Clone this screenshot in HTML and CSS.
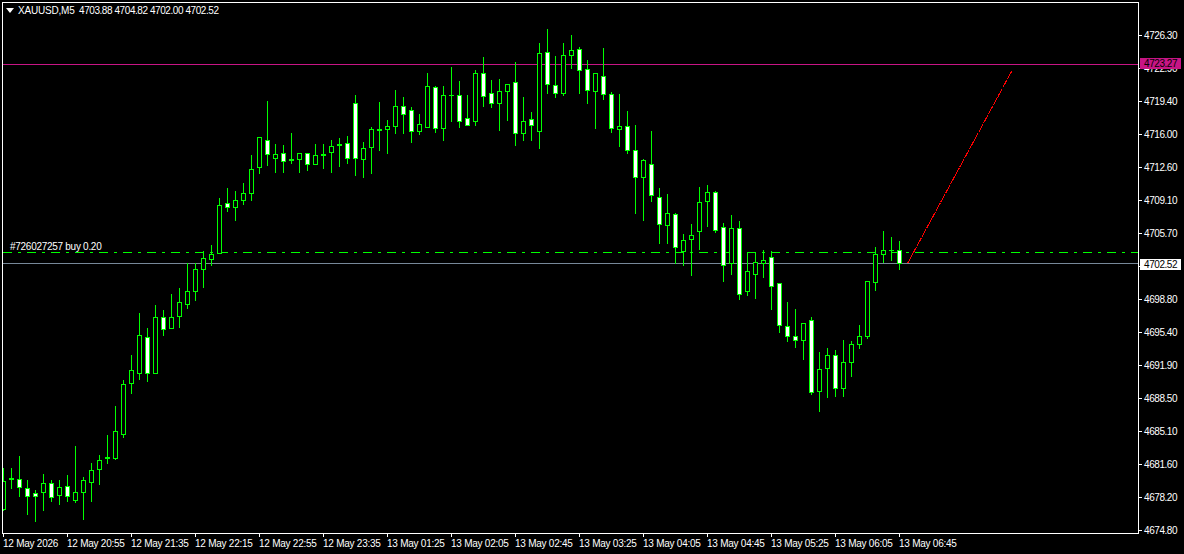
FILE: index.html
```html
<!DOCTYPE html>
<html lang="en">
<head>
    <meta charset="UTF-8">
    <meta name="viewport" content="width=device-width, initial-scale=1.0">
    <title>XAUUSD,M5</title>
    <link rel="stylesheet" href="styles.css">
</head>
<body>
    <div class="terminal">
        <div class="plot">
            <svg id="chart" class="chart-canvas" width="1135" height="530" viewBox="3 3 1135 530" shape-rendering="crispEdges"></svg>
            <div class="chart-title">
                <svg class="title-arrow" width="8" height="5" viewBox="0 0 8 5"><polygon points="0,0 8,0 4,5" fill="#fff"></polygon></svg>
                <span class="symbol">XAUUSD,M5</span>
                <span class="ohlc">4703.88 4704.82 4702.00 4702.52</span>
            </div>
            <div class="order-label">#726027257 buy 0.20</div>
        </div>

        <div class="price-axis">
            <div class="tick">4726.30</div>
            <div class="tick">4722.90</div>
            <div class="tick">4719.40</div>
            <div class="tick">4716.00</div>
            <div class="tick">4712.60</div>
            <div class="tick">4709.10</div>
            <div class="tick">4705.70</div>
            <div class="tick">4702.30</div>
            <div class="tick">4698.80</div>
            <div class="tick">4695.40</div>
            <div class="tick">4691.90</div>
            <div class="tick">4688.50</div>
            <div class="tick">4685.10</div>
            <div class="tick">4681.60</div>
            <div class="tick">4678.20</div>
            <div class="tick">4674.80</div>
            <div class="price-tag level">4723.27</div>
            <div class="price-tag bid">4702.52</div>
        </div>

        <div class="time-axis">
            <div class="time">12 May 2026</div>
            <div class="time">12 May 20:55</div>
            <div class="time">12 May 21:35</div>
            <div class="time">12 May 22:15</div>
            <div class="time">12 May 22:55</div>
            <div class="time">12 May 23:35</div>
            <div class="time">13 May 01:25</div>
            <div class="time">13 May 02:05</div>
            <div class="time">13 May 02:45</div>
            <div class="time">13 May 03:25</div>
            <div class="time">13 May 04:05</div>
            <div class="time">13 May 04:45</div>
            <div class="time">13 May 05:25</div>
            <div class="time">13 May 06:05</div>
            <div class="time">13 May 06:45</div>
        </div>
    </div>

    <script src="script.js"></script>
</body>
</html>
```
FILE: styles.css
```css
body {
    margin: 0;
    background-color: #000;
    color: #fff;
    font-family: "Liberation Sans", sans-serif;
    font-size: 10px;
    line-height: 11px;
    letter-spacing: -0.43px;
}

.terminal {
    display: grid;
    grid-template-columns: 1139px 45px;
    grid-template-rows: 534px 20px;
    width: 1184px;
    height: 554px;
    overflow: hidden;
}

/* Chart area */
.plot {
    position: relative;
    margin: 2px 0 0 2px;
    border: 1px solid #fff;
}

.chart-canvas {
    display: block;
}

.chart-title {
    position: absolute;
    top: 2px;
    left: 3px;
    display: flex;
    align-items: center;
    height: 11px;
}

.title-arrow {
    margin-right: 4px;
}

.symbol {
    width: 61px;
    letter-spacing: -0.2px;
}

.order-label {
    position: absolute;
    top: 238px;
    left: 7px;
    letter-spacing: -0.28px;
}

/* Price scale */
.price-axis {
    position: relative;
    grid-row: 1 / span 2;
    grid-column: 2;
    padding-top: 19px;
}

.tick {
    position: relative;
    height: 33px;
    padding-left: 5px;
    line-height: 33px;
}

.tick::before {
    content: "";
    position: absolute;
    left: 0;
    top: 16px;
    width: 3px;
    height: 1px;
    background-color: #fff;
}

.price-tag {
    position: absolute;
    left: 1px;
    width: 37px;
    height: 11px;
    padding-left: 4px;
    color: #000;
}

.price-tag.level {
    top: 58px;
    background-color: #c71585;
}

.price-tag.bid {
    top: 259px;
    background-color: #fff;
}

/* Time scale */
.time-axis {
    display: flex;
    padding-left: 3px;
}

.time {
    position: relative;
    flex: 0 0 64px;
    padding-top: 4px;
    white-space: nowrap;
    letter-spacing: -0.25px;
}

.time::before {
    content: "";
    position: absolute;
    left: 0;
    top: 0;
    width: 1px;
    height: 3px;
    background-color: #fff;
}
```
FILE: script.js
```js
// high, body top, body bottom, low, fill ("b" hollow bull, "s" white bear, "d" doji)
var candles = [
    [468, 481, 509, 510, "b"], [468, 478, 479, 488, "d"], [456, 479, 487, 496, "s"], [480, 488, 496, 514, "s"],
    [490, 493, 496, 521, "s"], [474, 483, 492, 510, "b"], [480, 483, 497, 501, "s"], [480, 487, 495, 504, "b"],
    [475, 486, 496, 501, "s"], [446, 492, 500, 502, "b"], [477, 480, 492, 519, "b"], [463, 470, 482, 501, "b"],
    [455, 460, 469, 484, "b"], [435, 457, 458, 463, "d"], [406, 431, 458, 459, "b"], [380, 384, 434, 437, "b"],
    [355, 370, 383, 393, "b"], [313, 335, 373, 379, "b"], [328, 337, 373, 381, "s"], [305, 317, 373, 373, "b"],
    [310, 317, 329, 335, "s"], [294, 317, 328, 328, "b"], [288, 302, 316, 327, "b"], [263, 291, 304, 308, "b"],
    [263, 269, 291, 300, "b"], [251, 258, 269, 287, "b"], [245, 254, 259, 265, "b"], [198, 205, 253, 253, "b"],
    [188, 203, 207, 211, "s"], [191, 200, 207, 220, "b"], [183, 193, 200, 204, "b"], [155, 169, 193, 200, "b"],
    [137, 137, 167, 173, "b"], [101, 140, 154, 165, "s"], [144, 154, 158, 172, "b"], [145, 153, 161, 172, "s"],
    [133, 159, 160, 163, "d"], [153, 153, 159, 172, "b"], [153, 153, 164, 170, "s"], [144, 155, 164, 164, "b"],
    [144, 154, 155, 168, "d"], [140, 146, 152, 172, "b"], [138, 144, 145, 166, "d"], [136, 143, 158, 163, "s"],
    [95, 103, 158, 175, "s"], [142, 148, 159, 177, "b"], [127, 129, 147, 173, "b"], [102, 129, 130, 150, "d"],
    [120, 126, 129, 153, "b"], [90, 106, 126, 133, "b"], [97, 106, 114, 133, "s"], [107, 110, 131, 142, "s"],
    [114, 124, 131, 134, "b"], [73, 86, 127, 127, "b"], [86, 87, 128, 132, "s"], [86, 95, 128, 140, "b"],
    [67, 95, 95, 121, "d"], [81, 95, 121, 127, "s"], [95, 118, 125, 125, "s"], [70, 73, 121, 125, "b"],
    [57, 73, 96, 106, "s"], [80, 93, 103, 107, "s"], [79, 91, 103, 130, "b"], [84, 84, 91, 120, "b"],
    [62, 82, 133, 145, "s"], [97, 121, 133, 140, "b"], [112, 119, 125, 140, "s"], [43, 53, 131, 148, "b"],
    [29, 52, 84, 93, "s"], [56, 85, 93, 97, "s"], [43, 55, 93, 95, "b"], [35, 50, 55, 68, "b"],
    [47, 49, 70, 93, "s"], [60, 69, 90, 103, "s"], [73, 73, 91, 128, "b"], [48, 76, 94, 99, "s"],
    [92, 94, 128, 132, "s"], [94, 126, 129, 146, "b"], [111, 126, 150, 153, "s"], [125, 150, 177, 213, "s"],
    [159, 160, 177, 220, "b"], [131, 164, 195, 201, "s"], [188, 197, 224, 243, "s"], [194, 213, 225, 243, "b"],
    [213, 214, 247, 263, "s"], [234, 240, 251, 265, "b"], [224, 235, 239, 275, "b"], [187, 202, 231, 249, "b"],
    [185, 192, 201, 226, "b"], [191, 192, 230, 232, "s"], [223, 227, 265, 281, "s"], [215, 228, 263, 274, "b"],
    [221, 228, 294, 299, "s"], [252, 271, 291, 295, "b"], [252, 262, 274, 298, "b"], [250, 260, 263, 277, "b"],
    [251, 257, 286, 309, "s"], [283, 283, 325, 332, "s"], [302, 326, 336, 341, "s"], [309, 336, 340, 347, "s"],
    [323, 323, 340, 359, "b"], [317, 320, 392, 394, "s"], [352, 369, 391, 411, "b"], [348, 355, 368, 397, "b"],
    [350, 355, 388, 396, "s"], [340, 362, 388, 396, "b"], [341, 344, 362, 376, "b"], [325, 336, 344, 348, "b"],
    [281, 281, 336, 338, "b"], [247, 254, 282, 290, "b"], [231, 250, 254, 262, "b"], [237, 250, 250, 260, "d"],
    [241, 250, 263, 269, "s"]
];

function rect(x, y, w, h, fill) {
    return '<rect x="' + x + '" y="' + y + '" width="' + w + '" height="' + h + '" fill="' + fill + '"/>';
}

function drawCandle(c, i) {
    var x = 3 + i * 8;
    var out = rect(x, c[0], 1, c[3] - c[0] + 1, "#0f0");
    out += rect(x - 2, c[1], 5, c[2] - c[1] + 1, "#0f0");
    if (c[4] !== "d") {
        out += rect(x - 1, c[1] + 1, 3, c[2] - c[1] - 1, c[4] === "s" ? "#fff" : "#000");
    }
    return out;
}

var lines = '<line x1="3" x2="1138" y1="64.5" y2="64.5" stroke="#c71585"/>' +
    '<line x1="3" x2="1138" y1="252.5" y2="252.5" stroke="#0f0" stroke-dasharray="9 6 3 6"/>' +
    '<line x1="3" x2="1138" y1="263.5" y2="263.5" stroke="#778899"/>' +
    '<line x1="907.5" x2="1011.5" y1="263.5" y2="71.5" stroke="#f00" stroke-dasharray="9 1"/>';

document.getElementById("chart").innerHTML = lines + candles.map(drawCandle).join("");
```
